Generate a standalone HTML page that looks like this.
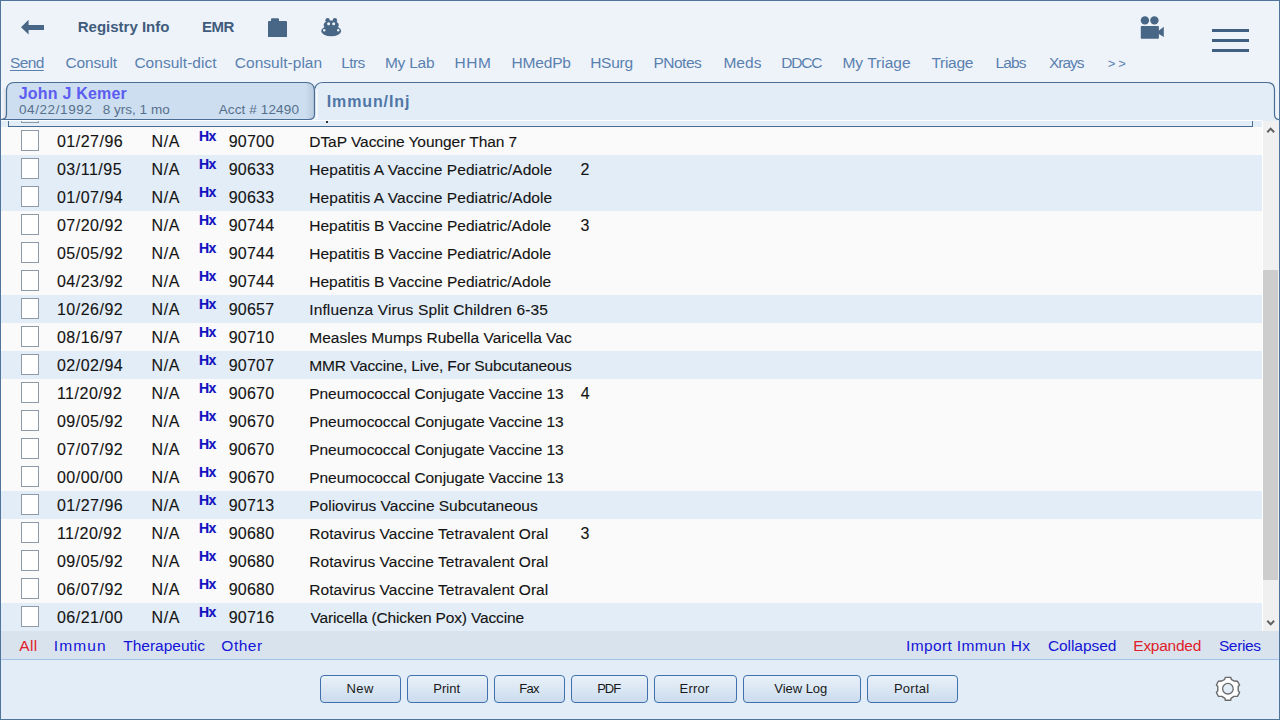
<!DOCTYPE html>
<html><head><meta charset="utf-8"><style>
html,body{margin:0;padding:0;}
body{width:1280px;height:720px;overflow:hidden;position:relative;background:#eef3fa;font-family:"Liberation Sans", sans-serif;}
.abs{position:absolute;}
.t{position:absolute;white-space:nowrap;}
.rt .t{-webkit-text-stroke:0.25px #141414;}
.cb{width:15.5px;height:18.5px;border:1px solid #8e9aa8;background:#fff;box-sizing:content-box;}
.btn{position:absolute;top:675px;height:26px;border:1px solid #4071ad;border-radius:4px;background:linear-gradient(#e9f1f9,#cbdcee);
font-size:13px;line-height:26px;text-align:center;color:#1a1a1a;}
#bottom{position:absolute;left:0;top:660px;width:1280px;height:60px;background:#e3edf7;}
#frame{position:absolute;left:0;top:0;width:1278px;height:718px;border:1px solid #4f759d;pointer-events:none;z-index:50;}
</style></head><body>
<div id="bottom"></div>
<svg class="abs" style="left:0;top:0" width="1280" height="60" viewBox="0 0 1280 60">
<path d="M21 27.2 L28.6 19.8 L28.6 25 L44 25 L44 30 L28.6 30 L28.6 34.6 Z" fill="#486786"/>
<path d="M268 22 Q268 21 269 21 L271 21 L271 19.2 Q271 18.2 272 18.2 L278 18.2 Q279 18.2 279 19.2 L279 21 L286 21 Q287 21 287 22 L287 37 L268 37 Z" fill="#486786"/>
<g fill="#486786">
<ellipse cx="331.2" cy="31" rx="10" ry="5.2"/>
<ellipse cx="331.2" cy="25" rx="7.6" ry="4.6"/>
<circle cx="327.6" cy="20.2" r="2.2"/>
<circle cx="334.9" cy="20.2" r="2.2"/>
</g>
<g fill="#eef3fa">
<circle cx="328.6" cy="23.7" r="1.5"/><circle cx="333.7" cy="23.7" r="1.5"/>
<circle cx="324.2" cy="30.2" r="1.2"/><circle cx="338.2" cy="30.2" r="1.2"/>
</g>
<g fill="#486786">
<circle cx="1144.9" cy="20.4" r="4.2"/><circle cx="1154.4" cy="20.4" r="4.2"/>
<rect x="1140.8" y="26" width="18.1" height="12.7" rx="0.8"/>
<path d="M1158 31.2 L1163.8 26.8 L1163.8 36.9 L1158 33.6 Z"/>
</g>
<g fill="#3f5f82">
<rect x="1212" y="29" width="37" height="3"/>
<rect x="1212" y="39" width="37" height="3"/>
<rect x="1212" y="49" width="37" height="3"/>
</g>
</svg>
<div class="t " style="left:77.7px;top:18.18px;font-size:15px;line-height:17.25px;color:#405c7c;font-weight:bold;letter-spacing:0.008px;">Registry Info</div>
<div class="t " style="left:201.9px;top:18.18px;font-size:15px;line-height:17.25px;color:#405c7c;font-weight:bold;letter-spacing:-0.5px;">EMR</div>
<div class="t " style="left:9.9px;top:53.72px;font-size:15.5px;line-height:17.82px;color:#5a80af;letter-spacing:-0.567px;text-decoration:underline;text-underline-offset:2px;">Send</div>
<div class="t " style="left:65.6px;top:53.72px;font-size:15.5px;line-height:17.82px;color:#5a80af;letter-spacing:-0.183px;">Consult</div>
<div class="t " style="left:134.4px;top:53.72px;font-size:15.5px;line-height:17.82px;color:#5a80af;letter-spacing:0.027px;">Consult-dict</div>
<div class="t " style="left:234.8px;top:53.72px;font-size:15.5px;line-height:17.82px;color:#5a80af;letter-spacing:0.027px;">Consult-plan</div>
<div class="t " style="left:341.2px;top:53.72px;font-size:15.5px;line-height:17.82px;color:#5a80af;letter-spacing:-0.567px;">Ltrs</div>
<div class="t " style="left:384.95px;top:53.72px;font-size:15.5px;line-height:17.82px;color:#5a80af;letter-spacing:-0.23px;">My Lab</div>
<div class="t " style="left:454.5px;top:53.72px;font-size:15.5px;line-height:17.82px;color:#5a80af;letter-spacing:0.6px;">HHM</div>
<div class="t " style="left:511.5px;top:53.72px;font-size:15.5px;line-height:17.82px;color:#5a80af;letter-spacing:-0.18px;">HMedPb</div>
<div class="t " style="left:590.2px;top:53.72px;font-size:15.5px;line-height:17.82px;color:#5a80af;letter-spacing:-0.275px;">HSurg</div>
<div class="t " style="left:653.4px;top:53.72px;font-size:15.5px;line-height:17.82px;color:#5a80af;letter-spacing:-0.49px;">PNotes</div>
<div class="t " style="left:723.4px;top:53.72px;font-size:15.5px;line-height:17.82px;color:#5a80af;letter-spacing:0.067px;">Meds</div>
<div class="t " style="left:781.2px;top:53.72px;font-size:15.5px;line-height:17.82px;color:#5a80af;letter-spacing:-1.167px;">DDCC</div>
<div class="t " style="left:842.45px;top:53.72px;font-size:15.5px;line-height:17.82px;color:#5a80af;letter-spacing:0.006px;">My Triage</div>
<div class="t " style="left:931.4px;top:53.72px;font-size:15.5px;line-height:17.82px;color:#5a80af;letter-spacing:-0.26px;">Triage</div>
<div class="t " style="left:995.4px;top:53.72px;font-size:15.5px;line-height:17.82px;color:#5a80af;letter-spacing:-0.8px;">Labs</div>
<div class="t " style="left:1049.1px;top:53.72px;font-size:15.5px;line-height:17.82px;color:#5a80af;letter-spacing:-1.075px;">Xrays</div>
<div class="t " style="left:1107.8px;top:57.22px;font-size:13px;line-height:14.95px;color:#5a80af;letter-spacing:0px;">&gt;</div>
<div class="t " style="left:1118.15px;top:57.22px;font-size:13px;line-height:14.95px;color:#5a80af;letter-spacing:0px;">&gt;</div>
<svg class="abs" style="left:0px;top:76px" width="1280" height="60" viewBox="0 76 1280 60">
<defs><linearGradient id="t1g" gradientUnits="userSpaceOnUse" x1="305" x2="314" y1="0" y2="0">
<stop offset="0" stop-color="#cddef0"/><stop offset="1" stop-color="#b9cbde"/></linearGradient></defs>
<path d="M315 119.5 L315 90 Q315 82.5 323 82.5 L1267 82.5 Q1274.5 82.5 1274.5 90 L1274.5 114 Q1274.5 119.5 1279 119.5 L1279 127 L315 127 Z" fill="#e3edf7" stroke="none"/>
<path d="M316.8 119 L316.8 90" stroke="#ffffff" stroke-width="1.5" opacity="0.8"/>
<path d="M315 88.5 Q316 82.5 323 82.5 L1267 82.5 Q1274.5 82.5 1274.5 90 L1274.5 114 Q1274.5 119.5 1279 119.5" fill="none" stroke="#4a6d93" stroke-width="1.2"/>
<defs><linearGradient id="lg1" gradientUnits="userSpaceOnUse" x1="1.5" x2="6.5" y1="0" y2="0"><stop offset="0" stop-color="#f3f6fa"/><stop offset="1" stop-color="#d9dee5"/></linearGradient></defs><rect x="1" y="88" width="5.8" height="31" fill="url(#lg1)"/>
<path d="M1 119.5 Q6.5 119.5 6.5 114 L6.5 90.5 Q6.5 82.5 14.5 82.5 L306 82.5 Q314.5 82.5 314.5 90.5 L314.5 114 Q314.5 119.5 309 119.5 Z" fill="url(#t1g)" stroke="#4a6d93" stroke-width="1.2"/>
</svg>
<div class="t " style="left:18.7px;top:84.86px;font-size:16px;line-height:18.4px;color:#5c5cf0;font-weight:bold;letter-spacing:0.209px;">John J Kemer</div>
<div class="t " style="left:18.9px;top:102.16px;font-size:13.5px;line-height:15.52px;color:#56708c;letter-spacing:0.611px;">04/22/1992</div>
<div class="t " style="left:102.8px;top:102.16px;font-size:13.5px;line-height:15.52px;color:#56708c;letter-spacing:0.01px;">8 yrs, 1 mo</div>
<div class="t " style="left:218.7px;top:102.16px;font-size:13.5px;line-height:15.52px;color:#56708c;letter-spacing:0.127px;">Acct # 12490</div>
<div class="t " style="left:326.7px;top:93.26px;font-size:16px;line-height:18.4px;color:#4f76a6;font-weight:bold;letter-spacing:0.887px;">Immun/Inj</div>
<div class="abs" style="left:1px;top:120px;width:1261px;height:7px;background:#e3edf7"></div>
<div class="abs" style="left:1px;top:120px;width:1261px;height:1px;background:#fbfdff"></div>
<div class="abs" style="left:21px;top:121px;width:15.5px;height:0.5px;border:1px solid #8e9aa8;border-top:none;"></div>
<div class="abs" style="left:8px;top:121px;width:1243px;height:5px;border-left:1.2px solid #4a6d93;border-right:1.2px solid #4a6d93;border-bottom:1.2px solid #4a6d93"></div>
<div class="abs" style="left:326px;top:121px;width:2px;height:2px;background:#333"></div>
<div class="abs" style="left:1px;top:127px;width:1261px;height:28px;background:#fafafa"></div>
<div class="abs cb" style="left:21px;top:130px"></div>
<div class="t " style="left:56.9px;top:133.26px;font-size:16px;line-height:18.4px;color:#141414;letter-spacing:0.514px;-webkit-text-stroke:0.12px #141414;">01/27/96</div>
<div class="t " style="left:151.45px;top:133.26px;font-size:16px;line-height:18.4px;color:#141414;letter-spacing:0.675px;-webkit-text-stroke:0.12px #141414;">N/A</div>
<div class="t " style="left:198.9px;top:127.60px;font-size:14px;line-height:16.1px;color:#1212c0;font-weight:bold;letter-spacing:-0.5px;-webkit-text-stroke:0.15px #1212c0;">Hx</div>
<div class="t " style="left:228.7px;top:133.26px;font-size:16px;line-height:18.4px;color:#141414;letter-spacing:0.225px;-webkit-text-stroke:0.12px #141414;">90700</div>
<div class="t " style="left:309.3px;top:133.12px;font-size:15.5px;line-height:17.82px;color:#141414;letter-spacing:-0.058px;-webkit-text-stroke:0.12px #141414;">DTaP Vaccine Younger Than 7</div>
<div class="abs" style="left:1px;top:155px;width:1261px;height:28px;background:#e3edf7"></div>
<div class="abs cb" style="left:21px;top:158px"></div>
<div class="t " style="left:56.9px;top:161.26px;font-size:16px;line-height:18.4px;color:#141414;letter-spacing:0.514px;-webkit-text-stroke:0.12px #141414;">03/11/95</div>
<div class="t " style="left:151.45px;top:161.26px;font-size:16px;line-height:18.4px;color:#141414;letter-spacing:0.675px;-webkit-text-stroke:0.12px #141414;">N/A</div>
<div class="t " style="left:198.9px;top:155.60px;font-size:14px;line-height:16.1px;color:#1212c0;font-weight:bold;letter-spacing:-0.5px;-webkit-text-stroke:0.15px #1212c0;">Hx</div>
<div class="t " style="left:228.7px;top:161.26px;font-size:16px;line-height:18.4px;color:#141414;letter-spacing:0.225px;-webkit-text-stroke:0.12px #141414;">90633</div>
<div class="t " style="left:309.3px;top:161.12px;font-size:15.5px;line-height:17.82px;color:#141414;letter-spacing:0.082px;-webkit-text-stroke:0.12px #141414;">Hepatitis A Vaccine Pediatric/Adole</div>
<div class="t " style="left:580.4px;top:161.26px;font-size:16px;line-height:18.4px;color:#141414;letter-spacing:0px;-webkit-text-stroke:0.12px #141414;">2</div>
<div class="abs" style="left:1px;top:183px;width:1261px;height:28px;background:#e3edf7"></div>
<div class="abs cb" style="left:21px;top:186px"></div>
<div class="t " style="left:56.9px;top:189.26px;font-size:16px;line-height:18.4px;color:#141414;letter-spacing:0.514px;-webkit-text-stroke:0.12px #141414;">01/07/94</div>
<div class="t " style="left:151.45px;top:189.26px;font-size:16px;line-height:18.4px;color:#141414;letter-spacing:0.675px;-webkit-text-stroke:0.12px #141414;">N/A</div>
<div class="t " style="left:198.9px;top:183.60px;font-size:14px;line-height:16.1px;color:#1212c0;font-weight:bold;letter-spacing:-0.5px;-webkit-text-stroke:0.15px #1212c0;">Hx</div>
<div class="t " style="left:228.7px;top:189.26px;font-size:16px;line-height:18.4px;color:#141414;letter-spacing:0.225px;-webkit-text-stroke:0.12px #141414;">90633</div>
<div class="t " style="left:309.3px;top:189.12px;font-size:15.5px;line-height:17.82px;color:#141414;letter-spacing:0.082px;-webkit-text-stroke:0.12px #141414;">Hepatitis A Vaccine Pediatric/Adole</div>
<div class="abs" style="left:1px;top:211px;width:1261px;height:28px;background:#fafafa"></div>
<div class="abs cb" style="left:21px;top:214px"></div>
<div class="t " style="left:56.9px;top:217.26px;font-size:16px;line-height:18.4px;color:#141414;letter-spacing:0.514px;-webkit-text-stroke:0.12px #141414;">07/20/92</div>
<div class="t " style="left:151.45px;top:217.26px;font-size:16px;line-height:18.4px;color:#141414;letter-spacing:0.675px;-webkit-text-stroke:0.12px #141414;">N/A</div>
<div class="t " style="left:198.9px;top:211.60px;font-size:14px;line-height:16.1px;color:#1212c0;font-weight:bold;letter-spacing:-0.5px;-webkit-text-stroke:0.15px #1212c0;">Hx</div>
<div class="t " style="left:228.7px;top:217.26px;font-size:16px;line-height:18.4px;color:#141414;letter-spacing:0.225px;-webkit-text-stroke:0.12px #141414;">90744</div>
<div class="t " style="left:309.3px;top:217.12px;font-size:15.5px;line-height:17.82px;color:#141414;letter-spacing:0.003px;-webkit-text-stroke:0.12px #141414;">Hepatitis B Vaccine Pediatric/Adole</div>
<div class="t " style="left:580.6px;top:217.26px;font-size:16px;line-height:18.4px;color:#141414;letter-spacing:0px;-webkit-text-stroke:0.12px #141414;">3</div>
<div class="abs" style="left:1px;top:239px;width:1261px;height:28px;background:#fafafa"></div>
<div class="abs cb" style="left:21px;top:242px"></div>
<div class="t " style="left:56.9px;top:245.26px;font-size:16px;line-height:18.4px;color:#141414;letter-spacing:0.514px;-webkit-text-stroke:0.12px #141414;">05/05/92</div>
<div class="t " style="left:151.45px;top:245.26px;font-size:16px;line-height:18.4px;color:#141414;letter-spacing:0.675px;-webkit-text-stroke:0.12px #141414;">N/A</div>
<div class="t " style="left:198.9px;top:239.60px;font-size:14px;line-height:16.1px;color:#1212c0;font-weight:bold;letter-spacing:-0.5px;-webkit-text-stroke:0.15px #1212c0;">Hx</div>
<div class="t " style="left:228.7px;top:245.26px;font-size:16px;line-height:18.4px;color:#141414;letter-spacing:0.225px;-webkit-text-stroke:0.12px #141414;">90744</div>
<div class="t " style="left:309.3px;top:245.12px;font-size:15.5px;line-height:17.82px;color:#141414;letter-spacing:0.003px;-webkit-text-stroke:0.12px #141414;">Hepatitis B Vaccine Pediatric/Adole</div>
<div class="abs" style="left:1px;top:267px;width:1261px;height:28px;background:#fafafa"></div>
<div class="abs cb" style="left:21px;top:270px"></div>
<div class="t " style="left:56.9px;top:273.26px;font-size:16px;line-height:18.4px;color:#141414;letter-spacing:0.514px;-webkit-text-stroke:0.12px #141414;">04/23/92</div>
<div class="t " style="left:151.45px;top:273.26px;font-size:16px;line-height:18.4px;color:#141414;letter-spacing:0.675px;-webkit-text-stroke:0.12px #141414;">N/A</div>
<div class="t " style="left:198.9px;top:267.60px;font-size:14px;line-height:16.1px;color:#1212c0;font-weight:bold;letter-spacing:-0.5px;-webkit-text-stroke:0.15px #1212c0;">Hx</div>
<div class="t " style="left:228.7px;top:273.26px;font-size:16px;line-height:18.4px;color:#141414;letter-spacing:0.225px;-webkit-text-stroke:0.12px #141414;">90744</div>
<div class="t " style="left:309.3px;top:273.12px;font-size:15.5px;line-height:17.82px;color:#141414;letter-spacing:0.003px;-webkit-text-stroke:0.12px #141414;">Hepatitis B Vaccine Pediatric/Adole</div>
<div class="abs" style="left:1px;top:295px;width:1261px;height:28px;background:#e3edf7"></div>
<div class="abs cb" style="left:21px;top:298px"></div>
<div class="t " style="left:56.9px;top:301.26px;font-size:16px;line-height:18.4px;color:#141414;letter-spacing:0.514px;-webkit-text-stroke:0.12px #141414;">10/26/92</div>
<div class="t " style="left:151.45px;top:301.26px;font-size:16px;line-height:18.4px;color:#141414;letter-spacing:0.675px;-webkit-text-stroke:0.12px #141414;">N/A</div>
<div class="t " style="left:198.9px;top:295.60px;font-size:14px;line-height:16.1px;color:#1212c0;font-weight:bold;letter-spacing:-0.5px;-webkit-text-stroke:0.15px #1212c0;">Hx</div>
<div class="t " style="left:228.7px;top:301.26px;font-size:16px;line-height:18.4px;color:#141414;letter-spacing:0.225px;-webkit-text-stroke:0.12px #141414;">90657</div>
<div class="t " style="left:309.2px;top:301.12px;font-size:15.5px;line-height:17.82px;color:#141414;letter-spacing:0.135px;-webkit-text-stroke:0.12px #141414;">Influenza Virus Split Children 6-35</div>
<div class="abs" style="left:1px;top:323px;width:1261px;height:28px;background:#fafafa"></div>
<div class="abs cb" style="left:21px;top:326px"></div>
<div class="t " style="left:56.9px;top:329.26px;font-size:16px;line-height:18.4px;color:#141414;letter-spacing:0.514px;-webkit-text-stroke:0.12px #141414;">08/16/97</div>
<div class="t " style="left:151.45px;top:329.26px;font-size:16px;line-height:18.4px;color:#141414;letter-spacing:0.675px;-webkit-text-stroke:0.12px #141414;">N/A</div>
<div class="t " style="left:198.9px;top:323.60px;font-size:14px;line-height:16.1px;color:#1212c0;font-weight:bold;letter-spacing:-0.5px;-webkit-text-stroke:0.15px #1212c0;">Hx</div>
<div class="t " style="left:228.7px;top:329.26px;font-size:16px;line-height:18.4px;color:#141414;letter-spacing:0.225px;-webkit-text-stroke:0.12px #141414;">90710</div>
<div class="t " style="left:309.3px;top:329.12px;font-size:15.5px;line-height:17.82px;color:#141414;letter-spacing:0.006px;-webkit-text-stroke:0.12px #141414;">Measles Mumps Rubella Varicella Vac</div>
<div class="abs" style="left:1px;top:351px;width:1261px;height:28px;background:#e3edf7"></div>
<div class="abs cb" style="left:21px;top:354px"></div>
<div class="t " style="left:56.9px;top:357.26px;font-size:16px;line-height:18.4px;color:#141414;letter-spacing:0.514px;-webkit-text-stroke:0.12px #141414;">02/02/94</div>
<div class="t " style="left:151.45px;top:357.26px;font-size:16px;line-height:18.4px;color:#141414;letter-spacing:0.675px;-webkit-text-stroke:0.12px #141414;">N/A</div>
<div class="t " style="left:198.9px;top:351.60px;font-size:14px;line-height:16.1px;color:#1212c0;font-weight:bold;letter-spacing:-0.5px;-webkit-text-stroke:0.15px #1212c0;">Hx</div>
<div class="t " style="left:228.7px;top:357.26px;font-size:16px;line-height:18.4px;color:#141414;letter-spacing:0.225px;-webkit-text-stroke:0.12px #141414;">90707</div>
<div class="t " style="left:309.3px;top:357.12px;font-size:15.5px;line-height:17.82px;color:#141414;letter-spacing:-0.153px;-webkit-text-stroke:0.12px #141414;">MMR Vaccine, Live, For Subcutaneous</div>
<div class="abs" style="left:1px;top:379px;width:1261px;height:28px;background:#fafafa"></div>
<div class="abs cb" style="left:21px;top:382px"></div>
<div class="t " style="left:56.9px;top:385.26px;font-size:16px;line-height:18.4px;color:#141414;letter-spacing:0.514px;-webkit-text-stroke:0.12px #141414;">11/20/92</div>
<div class="t " style="left:151.45px;top:385.26px;font-size:16px;line-height:18.4px;color:#141414;letter-spacing:0.675px;-webkit-text-stroke:0.12px #141414;">N/A</div>
<div class="t " style="left:198.9px;top:379.60px;font-size:14px;line-height:16.1px;color:#1212c0;font-weight:bold;letter-spacing:-0.5px;-webkit-text-stroke:0.15px #1212c0;">Hx</div>
<div class="t " style="left:228.7px;top:385.26px;font-size:16px;line-height:18.4px;color:#141414;letter-spacing:0.225px;-webkit-text-stroke:0.12px #141414;">90670</div>
<div class="t " style="left:309.3px;top:385.12px;font-size:15.5px;line-height:17.82px;color:#141414;letter-spacing:-0.066px;-webkit-text-stroke:0.12px #141414;">Pneumococcal Conjugate Vaccine 13</div>
<div class="t " style="left:580.8px;top:385.26px;font-size:16px;line-height:18.4px;color:#141414;letter-spacing:0px;-webkit-text-stroke:0.12px #141414;">4</div>
<div class="abs" style="left:1px;top:407px;width:1261px;height:28px;background:#fafafa"></div>
<div class="abs cb" style="left:21px;top:410px"></div>
<div class="t " style="left:56.9px;top:413.26px;font-size:16px;line-height:18.4px;color:#141414;letter-spacing:0.514px;-webkit-text-stroke:0.12px #141414;">09/05/92</div>
<div class="t " style="left:151.45px;top:413.26px;font-size:16px;line-height:18.4px;color:#141414;letter-spacing:0.675px;-webkit-text-stroke:0.12px #141414;">N/A</div>
<div class="t " style="left:198.9px;top:407.60px;font-size:14px;line-height:16.1px;color:#1212c0;font-weight:bold;letter-spacing:-0.5px;-webkit-text-stroke:0.15px #1212c0;">Hx</div>
<div class="t " style="left:228.7px;top:413.26px;font-size:16px;line-height:18.4px;color:#141414;letter-spacing:0.225px;-webkit-text-stroke:0.12px #141414;">90670</div>
<div class="t " style="left:309.3px;top:413.12px;font-size:15.5px;line-height:17.82px;color:#141414;letter-spacing:-0.066px;-webkit-text-stroke:0.12px #141414;">Pneumococcal Conjugate Vaccine 13</div>
<div class="abs" style="left:1px;top:435px;width:1261px;height:28px;background:#fafafa"></div>
<div class="abs cb" style="left:21px;top:438px"></div>
<div class="t " style="left:56.9px;top:441.26px;font-size:16px;line-height:18.4px;color:#141414;letter-spacing:0.514px;-webkit-text-stroke:0.12px #141414;">07/07/92</div>
<div class="t " style="left:151.45px;top:441.26px;font-size:16px;line-height:18.4px;color:#141414;letter-spacing:0.675px;-webkit-text-stroke:0.12px #141414;">N/A</div>
<div class="t " style="left:198.9px;top:435.60px;font-size:14px;line-height:16.1px;color:#1212c0;font-weight:bold;letter-spacing:-0.5px;-webkit-text-stroke:0.15px #1212c0;">Hx</div>
<div class="t " style="left:228.7px;top:441.26px;font-size:16px;line-height:18.4px;color:#141414;letter-spacing:0.225px;-webkit-text-stroke:0.12px #141414;">90670</div>
<div class="t " style="left:309.3px;top:441.12px;font-size:15.5px;line-height:17.82px;color:#141414;letter-spacing:-0.066px;-webkit-text-stroke:0.12px #141414;">Pneumococcal Conjugate Vaccine 13</div>
<div class="abs" style="left:1px;top:463px;width:1261px;height:28px;background:#fafafa"></div>
<div class="abs cb" style="left:21px;top:466px"></div>
<div class="t " style="left:56.9px;top:469.26px;font-size:16px;line-height:18.4px;color:#141414;letter-spacing:0.514px;-webkit-text-stroke:0.12px #141414;">00/00/00</div>
<div class="t " style="left:151.45px;top:469.26px;font-size:16px;line-height:18.4px;color:#141414;letter-spacing:0.675px;-webkit-text-stroke:0.12px #141414;">N/A</div>
<div class="t " style="left:198.9px;top:463.60px;font-size:14px;line-height:16.1px;color:#1212c0;font-weight:bold;letter-spacing:-0.5px;-webkit-text-stroke:0.15px #1212c0;">Hx</div>
<div class="t " style="left:228.7px;top:469.26px;font-size:16px;line-height:18.4px;color:#141414;letter-spacing:0.225px;-webkit-text-stroke:0.12px #141414;">90670</div>
<div class="t " style="left:309.3px;top:469.12px;font-size:15.5px;line-height:17.82px;color:#141414;letter-spacing:-0.066px;-webkit-text-stroke:0.12px #141414;">Pneumococcal Conjugate Vaccine 13</div>
<div class="abs" style="left:1px;top:491px;width:1261px;height:28px;background:#e3edf7"></div>
<div class="abs cb" style="left:21px;top:494px"></div>
<div class="t " style="left:56.9px;top:497.26px;font-size:16px;line-height:18.4px;color:#141414;letter-spacing:0.514px;-webkit-text-stroke:0.12px #141414;">01/27/96</div>
<div class="t " style="left:151.45px;top:497.26px;font-size:16px;line-height:18.4px;color:#141414;letter-spacing:0.675px;-webkit-text-stroke:0.12px #141414;">N/A</div>
<div class="t " style="left:198.9px;top:491.60px;font-size:14px;line-height:16.1px;color:#1212c0;font-weight:bold;letter-spacing:-0.5px;-webkit-text-stroke:0.15px #1212c0;">Hx</div>
<div class="t " style="left:228.7px;top:497.26px;font-size:16px;line-height:18.4px;color:#141414;letter-spacing:0.225px;-webkit-text-stroke:0.12px #141414;">90713</div>
<div class="t " style="left:309.3px;top:497.12px;font-size:15.5px;line-height:17.82px;color:#141414;letter-spacing:-0.017px;-webkit-text-stroke:0.12px #141414;">Poliovirus Vaccine Subcutaneous</div>
<div class="abs" style="left:1px;top:519px;width:1261px;height:28px;background:#fafafa"></div>
<div class="abs cb" style="left:21px;top:522px"></div>
<div class="t " style="left:56.9px;top:525.26px;font-size:16px;line-height:18.4px;color:#141414;letter-spacing:0.514px;-webkit-text-stroke:0.12px #141414;">11/20/92</div>
<div class="t " style="left:151.45px;top:525.26px;font-size:16px;line-height:18.4px;color:#141414;letter-spacing:0.675px;-webkit-text-stroke:0.12px #141414;">N/A</div>
<div class="t " style="left:198.9px;top:519.60px;font-size:14px;line-height:16.1px;color:#1212c0;font-weight:bold;letter-spacing:-0.5px;-webkit-text-stroke:0.15px #1212c0;">Hx</div>
<div class="t " style="left:228.7px;top:525.26px;font-size:16px;line-height:18.4px;color:#141414;letter-spacing:0.225px;-webkit-text-stroke:0.12px #141414;">90680</div>
<div class="t " style="left:309.3px;top:525.12px;font-size:15.5px;line-height:17.82px;color:#141414;letter-spacing:0.052px;-webkit-text-stroke:0.12px #141414;">Rotavirus Vaccine Tetravalent Oral</div>
<div class="t " style="left:580.6px;top:525.26px;font-size:16px;line-height:18.4px;color:#141414;letter-spacing:0px;-webkit-text-stroke:0.12px #141414;">3</div>
<div class="abs" style="left:1px;top:547px;width:1261px;height:28px;background:#fafafa"></div>
<div class="abs cb" style="left:21px;top:550px"></div>
<div class="t " style="left:56.9px;top:553.26px;font-size:16px;line-height:18.4px;color:#141414;letter-spacing:0.514px;-webkit-text-stroke:0.12px #141414;">09/05/92</div>
<div class="t " style="left:151.45px;top:553.26px;font-size:16px;line-height:18.4px;color:#141414;letter-spacing:0.675px;-webkit-text-stroke:0.12px #141414;">N/A</div>
<div class="t " style="left:198.9px;top:547.60px;font-size:14px;line-height:16.1px;color:#1212c0;font-weight:bold;letter-spacing:-0.5px;-webkit-text-stroke:0.15px #1212c0;">Hx</div>
<div class="t " style="left:228.7px;top:553.26px;font-size:16px;line-height:18.4px;color:#141414;letter-spacing:0.225px;-webkit-text-stroke:0.12px #141414;">90680</div>
<div class="t " style="left:309.3px;top:553.12px;font-size:15.5px;line-height:17.82px;color:#141414;letter-spacing:0.052px;-webkit-text-stroke:0.12px #141414;">Rotavirus Vaccine Tetravalent Oral</div>
<div class="abs" style="left:1px;top:575px;width:1261px;height:28px;background:#fafafa"></div>
<div class="abs cb" style="left:21px;top:578px"></div>
<div class="t " style="left:56.9px;top:581.26px;font-size:16px;line-height:18.4px;color:#141414;letter-spacing:0.514px;-webkit-text-stroke:0.12px #141414;">06/07/92</div>
<div class="t " style="left:151.45px;top:581.26px;font-size:16px;line-height:18.4px;color:#141414;letter-spacing:0.675px;-webkit-text-stroke:0.12px #141414;">N/A</div>
<div class="t " style="left:198.9px;top:575.60px;font-size:14px;line-height:16.1px;color:#1212c0;font-weight:bold;letter-spacing:-0.5px;-webkit-text-stroke:0.15px #1212c0;">Hx</div>
<div class="t " style="left:228.7px;top:581.26px;font-size:16px;line-height:18.4px;color:#141414;letter-spacing:0.225px;-webkit-text-stroke:0.12px #141414;">90680</div>
<div class="t " style="left:309.3px;top:581.12px;font-size:15.5px;line-height:17.82px;color:#141414;letter-spacing:0.052px;-webkit-text-stroke:0.12px #141414;">Rotavirus Vaccine Tetravalent Oral</div>
<div class="abs" style="left:1px;top:603px;width:1261px;height:28px;background:#e3edf7"></div>
<div class="abs cb" style="left:21px;top:606px"></div>
<div class="t " style="left:56.9px;top:609.26px;font-size:16px;line-height:18.4px;color:#141414;letter-spacing:0.514px;-webkit-text-stroke:0.12px #141414;">06/21/00</div>
<div class="t " style="left:151.45px;top:609.26px;font-size:16px;line-height:18.4px;color:#141414;letter-spacing:0.675px;-webkit-text-stroke:0.12px #141414;">N/A</div>
<div class="t " style="left:198.9px;top:603.60px;font-size:14px;line-height:16.1px;color:#1212c0;font-weight:bold;letter-spacing:-0.5px;-webkit-text-stroke:0.15px #1212c0;">Hx</div>
<div class="t " style="left:228.7px;top:609.26px;font-size:16px;line-height:18.4px;color:#141414;letter-spacing:0.225px;-webkit-text-stroke:0.12px #141414;">90716</div>
<div class="t " style="left:310.5px;top:609.12px;font-size:15.5px;line-height:17.82px;color:#141414;letter-spacing:-0.157px;-webkit-text-stroke:0.12px #141414;">Varicella (Chicken Pox) Vaccine</div>
<div class="abs" style="left:1262px;top:121px;width:1px;height:510px;background:#ffffff"></div>
<div class="abs" style="left:1263px;top:121px;width:16px;height:510px;background:#f0f0f0"></div>
<div class="abs" style="left:1263px;top:270px;width:15px;height:310px;background:#cdcdcd"></div>
<svg class="abs" style="left:1262px;top:121px" width="17" height="510" viewBox="0 0 17 510">
<path d="M5.3 11.2 L8.7 7.6 L12.1 11.2" fill="none" stroke="#606060" stroke-width="2"/>
<path d="M5.3 499.8 L8.7 503.4 L12.1 499.8" fill="none" stroke="#606060" stroke-width="2"/>
</svg>
<div class="abs" style="left:1px;top:631px;width:1278px;height:28px;background:#d9e3ed;border-bottom:1px solid #a3c4e6"></div>
<div class="t " style="left:19.25px;top:636.72px;font-size:15.5px;line-height:17.82px;color:#e0202a;letter-spacing:0.325px;">All</div>
<div class="t " style="left:53.7px;top:636.72px;font-size:15.5px;line-height:17.82px;color:#1414d8;letter-spacing:1.15px;">Immun</div>
<div class="t " style="left:123.3px;top:636.72px;font-size:15.5px;line-height:17.82px;color:#1414d8;letter-spacing:-0.02px;">Therapeutic</div>
<div class="t " style="left:221.3px;top:636.72px;font-size:15.5px;line-height:17.82px;color:#1414d8;letter-spacing:0.525px;">Other</div>
<div class="t " style="left:906.1px;top:636.72px;font-size:15.5px;line-height:17.82px;color:#1414d8;letter-spacing:0.357px;">Import Immun Hx</div>
<div class="t " style="left:1047.9px;top:636.72px;font-size:15.5px;line-height:17.82px;color:#1414d8;letter-spacing:-0.063px;">Collapsed</div>
<div class="t " style="left:1133.3px;top:636.72px;font-size:15.5px;line-height:17.82px;color:#e0202a;letter-spacing:-0.257px;">Expanded</div>
<div class="t " style="left:1218.9px;top:636.72px;font-size:15.5px;line-height:17.82px;color:#1414d8;letter-spacing:-0.36px;">Series</div>
<div class="btn" style="left:320px;width:79px"></div>
<div class="t " style="left:346.5px;top:681.62px;font-size:13px;line-height:14.95px;color:#1a1a1a;letter-spacing:0.45px;">New</div>
<div class="btn" style="left:407px;width:79px"></div>
<div class="t " style="left:433.2px;top:681.62px;font-size:13px;line-height:14.95px;color:#1a1a1a;letter-spacing:0.075px;">Print</div>
<div class="btn" style="left:494px;width:69px"></div>
<div class="t " style="left:519.2px;top:681.62px;font-size:13px;line-height:14.95px;color:#1a1a1a;letter-spacing:-0.7px;">Fax</div>
<div class="btn" style="left:571px;width:75px"></div>
<div class="t " style="left:597.2px;top:681.62px;font-size:13px;line-height:14.95px;color:#1a1a1a;letter-spacing:-1.05px;">PDF</div>
<div class="btn" style="left:654px;width:81px"></div>
<div class="t " style="left:679.5px;top:681.62px;font-size:13px;line-height:14.95px;color:#1a1a1a;letter-spacing:0.25px;">Error</div>
<div class="btn" style="left:743px;width:116px"></div>
<div class="t " style="left:774.3px;top:681.62px;font-size:13px;line-height:14.95px;color:#1a1a1a;letter-spacing:-0.043px;">View Log</div>
<div class="btn" style="left:867px;width:89px"></div>
<div class="t " style="left:893.9px;top:681.62px;font-size:13px;line-height:14.95px;color:#1a1a1a;letter-spacing:0.26px;">Portal</div>
<svg class="abs" style="left:1210px;top:670px" width="36" height="36" viewBox="1210 670 36 36">
<path d="M1225.3 677.4 L1230.8 677.4 L1231.3 679.3 L1233.9 681 L1237.5 681.3 L1239.6 685 L1238.2 686.5 L1238.2 690.8 L1239.6 692.4 L1237.5 696.3 L1233.9 696.4 L1230.9 698.4 L1230.8 700.3 L1225.3 700.3 L1225 698.4 L1221.9 696.4 L1218.3 696.3 L1216.4 692.4 L1217.8 690.8 L1217.8 686.5 L1216.4 685 L1218.3 681.3 L1221.9 681 L1224.7 679.3 Z" fill="#fff" stroke="#6a6a6a" stroke-width="1.4" stroke-linejoin="round"/>
<circle cx="1227.9" cy="688.7" r="5.3" fill="#e3edf7" stroke="#6a6a6a" stroke-width="1.3"/>
</svg>
<div id="frame"></div>
</body></html>
